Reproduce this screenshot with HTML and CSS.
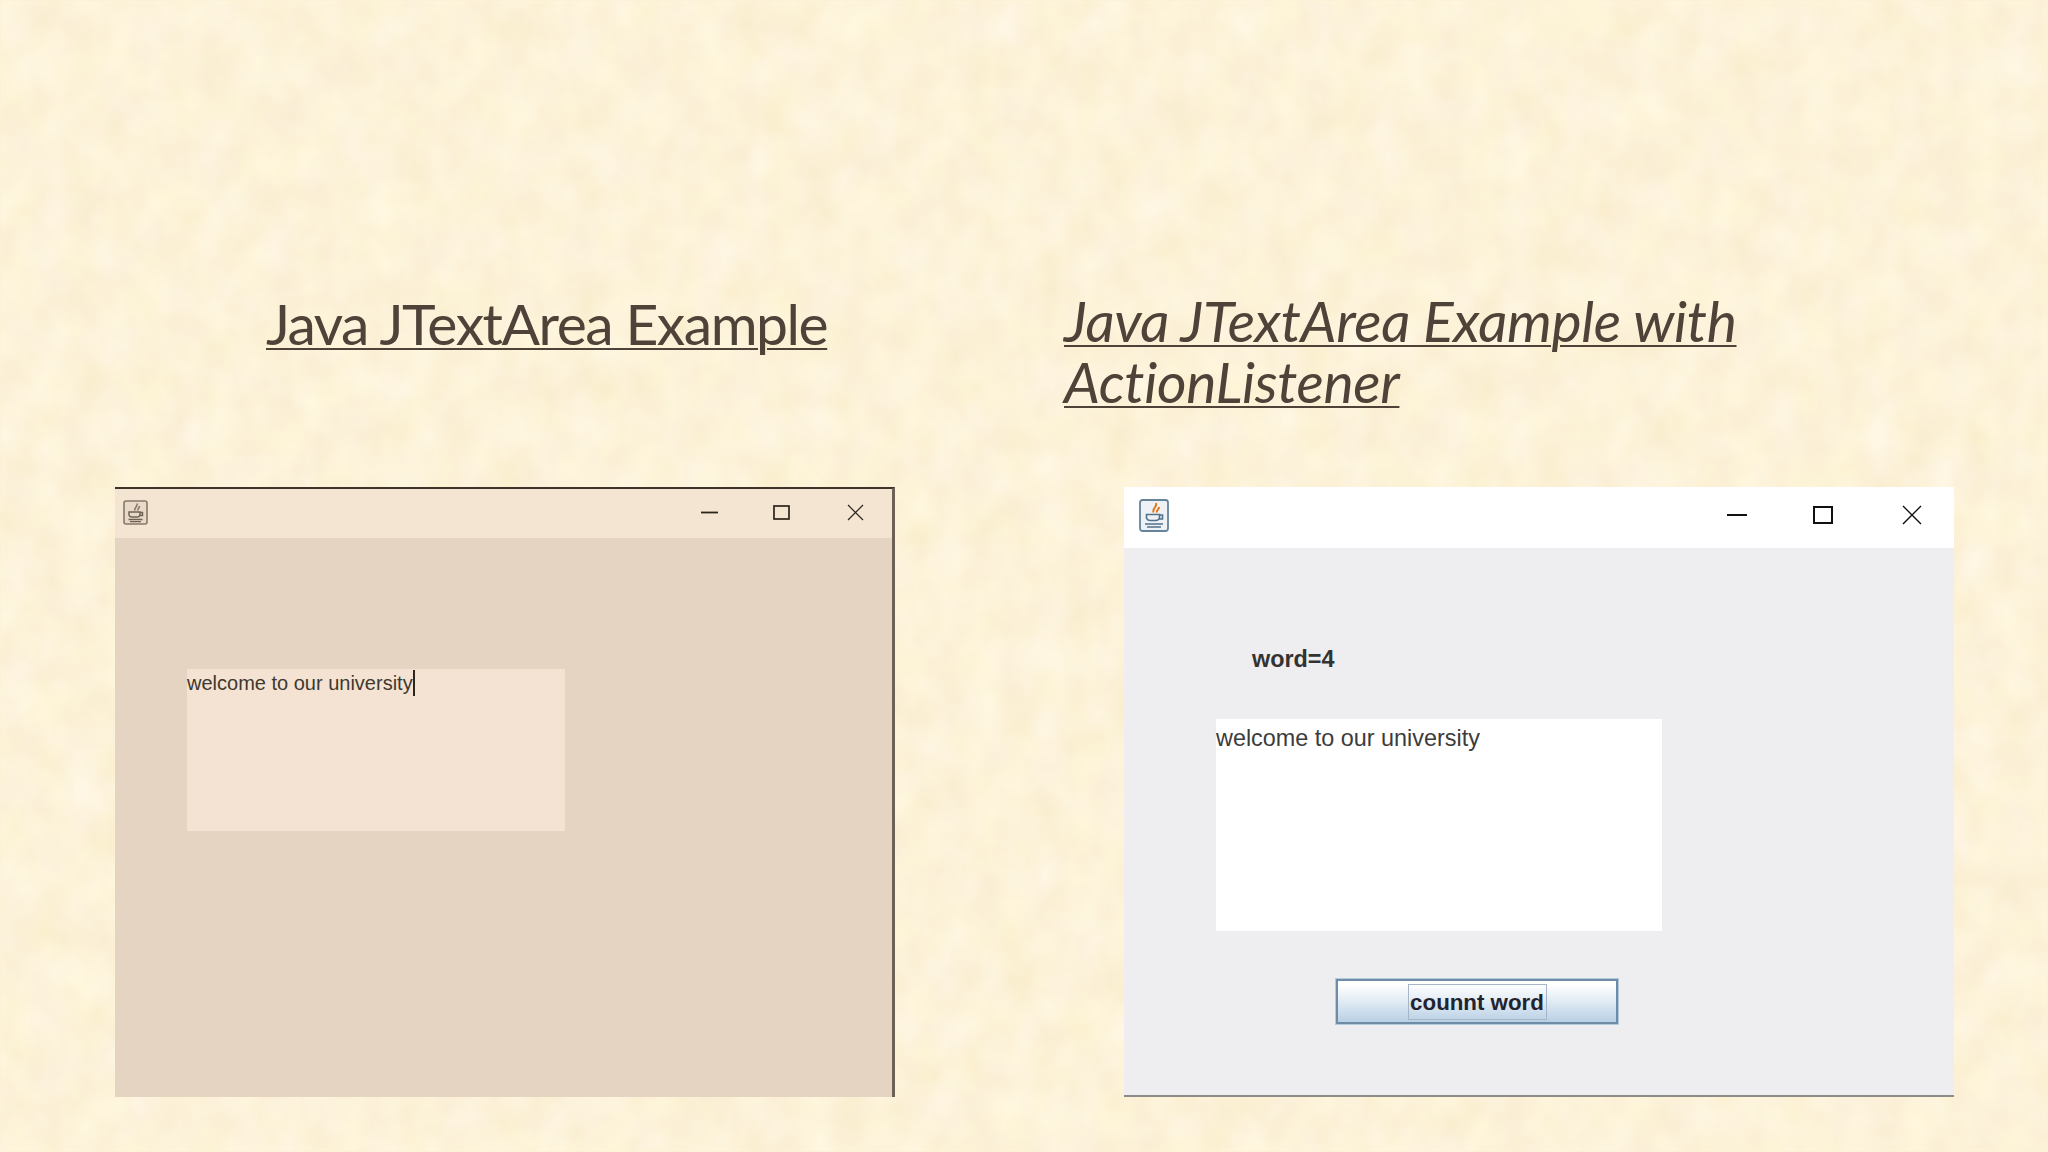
FILE: index.html
```html
<!DOCTYPE html>
<html lang="en">
<head>
<meta charset="utf-8">
<title>Java JTextArea Example</title>
<link rel="stylesheet" href="styles.css">
</head>
<body>
<svg class="paper" width="2048" height="1152" aria-hidden="true">
  <filter id="mottle" x="0" y="0" width="100%" height="100%" color-interpolation-filters="sRGB">
    <feTurbulence type="fractalNoise" baseFrequency="0.03 0.022" numOctaves="3" seed="11"/>
    <feColorMatrix type="matrix" values="0.03 0 0 0 0.975  0.05 0 0 0 0.925  0.09 0.06 0 0 0.775  0 0 0 0 1"/>
    <feGaussianBlur stdDeviation="2"/>
  </filter>
  <rect width="2048" height="1152" filter="url(#mottle)"/>
</svg>
<main class="slide">
  <div class="titles">
    <h1 class="title title-plain">Java JTextArea Example</h1>
    <h1 class="title title-italic">Java JTextArea Example with ActionListener</h1>
  </div>
  <div class="windows">
    <section class="win win-tan">
      <header class="bar bar-tan">
        <svg class="java java-tan" viewBox="0 0 25 25">
          <rect x="1" y="1" width="23" height="23" rx="2" fill="#e9d9c7" stroke="#85796c" stroke-width="1.6"/>
          <path d="M14 3.500c1 3-3 4-2 7M16.500 6c0 2-2 2-1.500 4.500" fill="none" stroke="#85796c" stroke-width="1.600"/>
          <path d="M6 12h11v3a3 3 0 0 1-3 2h-5a3 3 0 0 1-3-2zM17 12.500h2.500v3H17" fill="none" stroke="#6f6357" stroke-width="1.500"/>
          <path d="M5.500 19.500h14M7 21.700h11" stroke="#6f6357" stroke-width="1.300"/>
        </svg>
        <div class="controls controls-tan">
          <svg class="ctl-min" viewBox="0 0 17 17"><path d="M0 8.500h17" stroke="#2d241c" stroke-width="1.800"/></svg>
          <svg class="ctl-max" viewBox="0 0 17 17"><rect x="1" y="2" width="15" height="13" fill="none" stroke="#2d241c" stroke-width="1.700"/></svg>
          <svg class="ctl-close" viewBox="0 0 17 17"><path d="M1 1l15 15M16 1L1 16" stroke="#2d241c" stroke-width="1.200"/></svg>
        </div>
      </header>
      <div class="pane pane-tan">
        <div class="area area-tan"><span class="typed">welcome to our university</span></div>
      </div>
    </section>
    <section class="win win-grey">
      <header class="bar bar-grey">
        <svg class="java java-grey" viewBox="0 0 30 33">
          <rect x="1" y="1" width="28" height="31" rx="2.500" fill="#eef2f6" stroke="#66839c" stroke-width="1.800"/>
          <path d="M17 4c1.500 4-4 5-2.500 9.500M20 8c0 3-3 3-2 5.500" fill="none" stroke="#e2791d" stroke-width="2"/>
          <path d="M7.500 15.500h13v3.500a4 4 0 0 1-4 2.500h-5a4 4 0 0 1-4-2.500zM20.500 16h3v4h-3" fill="none" stroke="#52728c" stroke-width="1.600"/>
          <path d="M6 25h18M8 28h14" stroke="#52728c" stroke-width="1.600"/>
        </svg>
        <div class="controls controls-grey">
          <svg class="ctl-min" viewBox="0 0 20 20"><path d="M0 10h20" stroke="#111" stroke-width="2"/></svg>
          <svg class="ctl-max" viewBox="0 0 20 20"><rect x="1" y="2" width="18" height="16" fill="none" stroke="#111" stroke-width="2"/></svg>
          <svg class="ctl-close" viewBox="0 0 20 20"><path d="M1 1l18 18M19 1L1 19" stroke="#111" stroke-width="1.400"/></svg>
        </div>
      </header>
      <div class="pane pane-grey">
        <div class="word">word=4</div>
        <div class="area area-grey">welcome to our university</div>
        <button class="count" type="button"><span class="focus">counnt word</span></button>
      </div>
    </section>
  </div>
</main>
</body>
</html>
```
FILE: styles.css
```css
* { box-sizing: border-box; }
html, body { margin: 0; width: 2048px; height: 1152px; overflow: hidden; }
body { background: #fdf1d6; font-family: "Liberation Sans", Arial, sans-serif; color: #3a3531; position: relative; }
.paper { position: absolute; left: 0; top: 0; display: block; }
.slide { position: relative; display: flex; flex-direction: column; height: 1152px; }

.titles { display: flex; height: 487px; padding-top: 290px; }
.title {
  margin: 0;
  font-family: Lato, "Open Sans", sans-serif;
  font-weight: 400;
  font-size: 57px;
  line-height: 61px;
  color: #4f4238;
  text-decoration: underline;
  text-decoration-thickness: 2px;
  text-underline-offset: 3px;
}
.title-plain { width: 798px; padding-left: 266px; flex: none; white-space: nowrap; padding-top: 3px; letter-spacing: -1.450px; }
.title-italic { width: 760px; margin-left: 266px; font-style: italic; letter-spacing: -0.350px; }

.windows { display: flex; padding-left: 115px; }
.win { display: flex; flex-direction: column; height: 610px; }
.win-tan { width: 780px; border-top: 2px solid #3f3429; border-right: 3px solid #6e6257; }
.win-grey { width: 830px; margin-left: 229px; border-bottom: 2px solid #8d8b87; }

.bar { display: flex; align-items: center; justify-content: space-between; flex: none; }
.bar-tan { height: 49px; background: #f4e4d2; padding: 0 28.500px 2px 8px; }
.bar-grey { height: 61px; background: #fff; padding: 0 32px 5px 15px; }
.java-tan { width: 25px; height: 25px; display: block; }
.java-grey { width: 30px; height: 33px; display: block; }

.controls { display: flex; align-items: center; }
.controls svg { display: block; }
.controls-tan { gap: 55px; }
.controls-tan svg { width: 17px; height: 17px; }
.controls-tan .ctl-close { margin-left: 1.800px; }
.controls-grey { gap: 66px; }
.controls-grey svg { width: 20px; height: 20px; }
.controls-grey .ctl-close { margin-left: 3px; }

.pane { flex: 1; display: flex; flex-direction: column; }
.pane-tan { background: #e4d4c1; padding: 131px 0 0 72px; }
.pane-grey { background: #eeedef; padding: 0 0 0 92px; }

.area { white-space: nowrap; }
.area-tan { width: 378px; height: 162px; background: #f4e3d2; font-size: 20px; line-height: 27px; padding-top: 1px; color: #40382f; }
.typed { border-right: 2px solid #2d241c; display: inline-block; height: 26px; }
.area-grey { width: 446px; height: 212px; background: #fff; font-size: 23.400px; line-height: 38px; color: #3c3c3c; }

.word { font-weight: 700; font-size: 23.400px; line-height: 30px; color: #333; margin: 96px 0 0 36px; height: 75px; }
.count {
  display: flex; align-items: center; justify-content: center;
  width: 284px; height: 47px; margin: 47px 0 0 119px; padding: 0;
  border: 3px solid #6f8ba5; outline: 1px solid #b4cadd; outline-offset: -1px;
  background: linear-gradient(#ffffff 8%, #e8f0f7 40%, #b9d0e5 100%);
  font: 700 22.300px/1 "Liberation Sans", Arial, sans-serif; color: #23232f;
}
.focus { display: block; width: 139px; height: 36px; line-height: 36px; border: 1px solid #a6b6c8; white-space: nowrap; text-align: center; }
```
